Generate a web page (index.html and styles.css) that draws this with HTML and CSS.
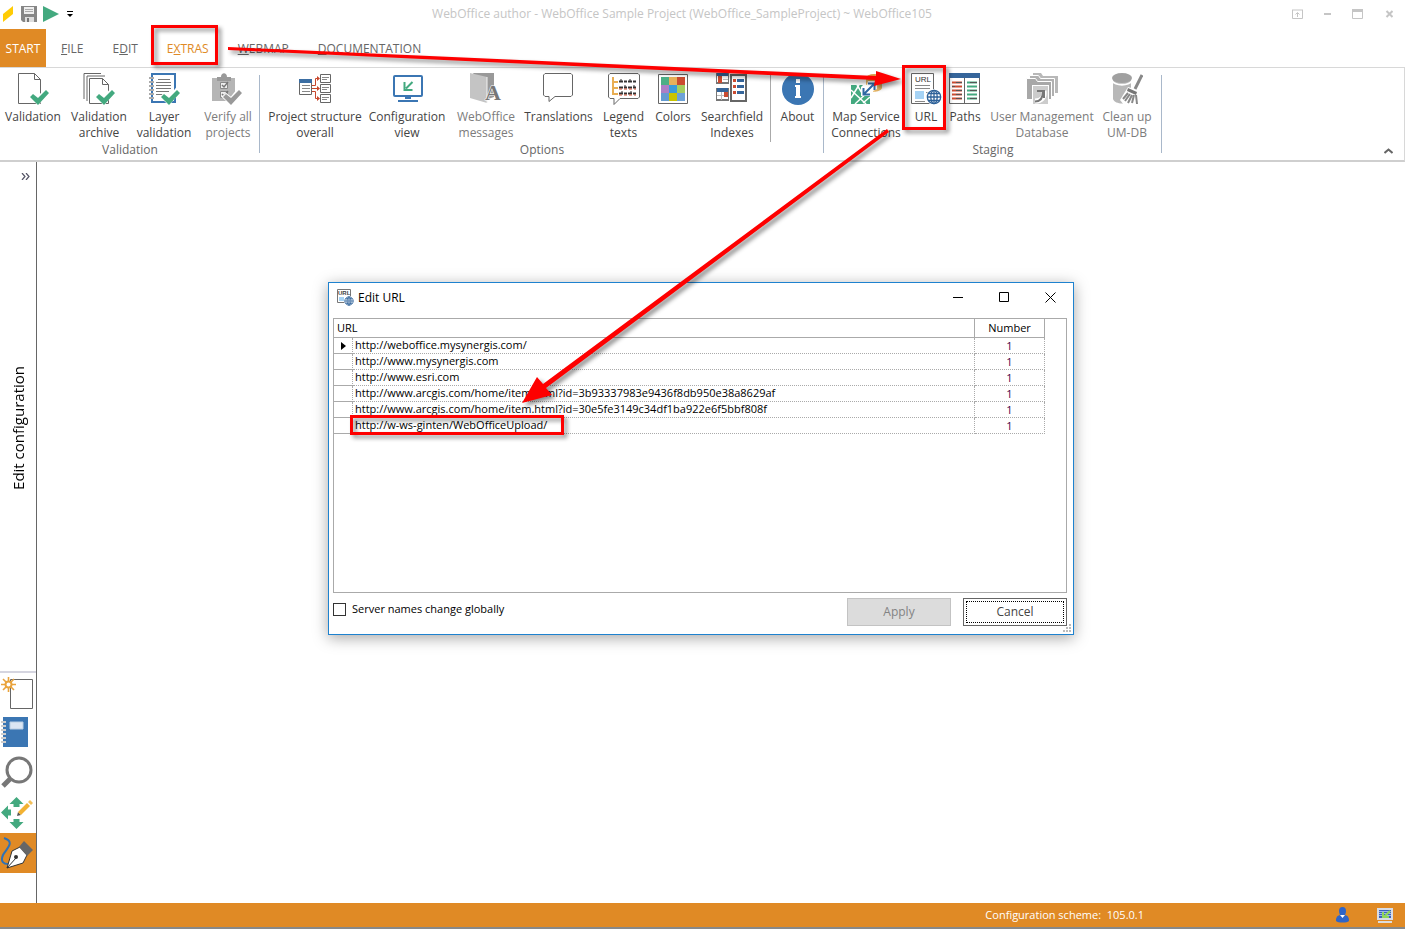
FILE: index.html
```html
<!DOCTYPE html>
<html lang="en">
<head>
  <meta charset="UTF-8" />
  <title>WebOffice author - WebOffice Sample Project</title>
  <link rel="stylesheet" href="styles.css">
</head>
<body>
  <!-- shared symbols -->
  <svg class="symbols" aria-hidden="true">
    <symbol id="check" viewBox="0 0 32 32">
      <path d="M13 24l3-3 5 4 8-10 3 3-11 13z" stroke="#fff" stroke-width="2" fill="#fff"/>
      <path d="M13 24l3-3 5 4 8-8 3 3-11 12z" fill="currentColor"/>
    </symbol>
    <symbol id="globe" viewBox="0 0 16 16">
      <circle cx="8" cy="8" r="8" fill="#fff"/>
      <g fill="none" stroke="#2d6199" stroke-width="1.300">
        <circle cx="8" cy="8" r="6.700"/><ellipse cx="8" cy="8" rx="3.200" ry="6.700"/>
        <path d="M8 1v14M1 8h14M2.500 4.500h11M2.500 11.500h11"/>
      </g>
    </symbol>
  </svg>

  <header class="titlebar">
    <div class="quick">
      <svg width="10" height="16"><path d="M0 8l10-8v8L0 16z" fill="#ffcc05"/></svg>
      <button aria-label="Save"><svg width="16" height="16"><path d="M0 0h16v16H2l-2-2z" fill="#868686"/><path d="M3 1h10v7H3z" fill="#eee"/><path d="M4 3.500h8M4 5.500h8" stroke="#aaa"/><path d="M4 11h9v5H4z" fill="#ddd"/><path d="M6 12h2v4H6z" fill="#777"/></svg></button>
      <button aria-label="Run"><svg width="16" height="16"><path d="M0 0l16 8-16 8z" fill="#43a97f"/></svg></button>
      <button class="more" aria-label="Customize"><svg width="6" height="6"><path d="M0 .5h6" stroke="#000"/><path d="M0 3h6L3 6z"/></svg></button>
    </div>
    <div class="title">WebOffice author - WebOffice Sample Project (WebOffice_SampleProject) ~ WebOffice105</div>
    <div class="winbtns">
      <button aria-label="Ribbon options"><svg width="11" height="10"><path d="M.5 1v8.500h10V1M0 1h11" fill="none" stroke="#c5c5c5"/><path d="M5.500 8V4M3.500 5.500l2-2 2 2" fill="none" stroke="#c5c5c5"/></svg></button>
      <button aria-label="Minimize"><svg width="11" height="10"><path d="M2 4h7v2H2z" fill="#c5c5c5"/></svg></button>
      <button aria-label="Maximize"><svg width="11" height="10"><path d="M.5 1v8.500h10V1" fill="none" stroke="#c5c5c5"/><path d="M0 0h11v3H0z" fill="#c5c5c5"/></svg></button>
      <button aria-label="Close"><svg width="11" height="10"><path d="M4.500 2l6 6M10.500 2l-6 6" stroke="#c5c5c5" stroke-width="2"/></svg></button>
    </div>
  </header>

  <nav class="tabs">
    <a href="#" class="start">START</a>
    <a href="#"><u>F</u>ILE</a>
    <a href="#">E<u>D</u>IT</a>
    <a href="#" class="active">E<u>X</u>TRAS</a>
    <a href="#"><u>W</u>EBMAP</a>
    <a href="#"><u>D</u>OCUMENTATION</a>
  </nav>

  <section class="ribbon">
    <div class="group">
      <div class="items validation">
        <button>
          <svg class="icon" viewBox="0 0 32 32"><path d="M1.500 .5h16l6 6v24h-22zM17.500 .5v6h6" fill="#fff" stroke="#666"/><use href="#check" class="green"/></svg>
          Validation
        </button>
        <button>
          <svg class="icon" viewBox="0 0 32 32"><path d="M1 26V.5h17M4 28V3h18" fill="none" stroke="#666"/><path d="M6.500 5.500h13l6 6v19h-19zM19.500 5.500v6h6" fill="#fff" stroke="#666"/><use href="#check" class="green"/></svg>
          Validation<br>archive
        </button>
        <button>
          <svg class="icon" viewBox="0 0 32 32"><path d="M4 1h23v28H4z" fill="#fff" stroke="#3b76b3" stroke-width="2"/><path d="M1 5h5M1 9h5M1 13h5M1 17h5M1 21h5M1 25h5" stroke="#aaa" stroke-width="2"/><path d="M10 6.500h12M8 9.500h15M8 12.500h15M8 15.500h15M8 18.500h13M8 21.500h8" stroke="#777"/><use href="#check" class="green"/></svg>
          Layer<br>validation
        </button>
        <button disabled>
          <svg class="icon" viewBox="0 0 32 32"><path d="M0 5h23v23H0z" fill="#b5b5b5"/><path d="M5 4h4c0-5 6-5 6 0h4v4H5z" fill="#999"/><path d="M8.500 9.500h7v6h-7zM8.500 18.500h7v6h-7z" fill="#eee" stroke="#888"/><path d="M10 12l2 2 4-5M10 21l2 2 4-5" fill="none" stroke="#777" stroke-width="1.500"/><use href="#check" class="grey" x="-2"/></svg>
          Verify all<br>projects
        </button>
      </div>
      <div class="caption">Validation</div>
    </div>

    <div class="group">
      <div class="items options">
        <button>
          <svg class="icon" viewBox="0 0 32 32"><path d="M.5 6.500h12v15H.5z" fill="#fff" stroke="#666"/><path d="M0 6h13v4H0z" fill="#3b6ea3"/><path d="M3 12.500h8M3 15.500h8M3 18.500h8" stroke="#888"/><path d="M13 12.500h3.500v-7H20M13 15.500h7M13 18.500h3.500v7H20" fill="none" stroke="#c8472c"/><path d="M18 3l3 2.500-3 2.500zM18 13l3 2.500-3 2.500zM18 23l3 2.500-3 2.500z" fill="#c8472c"/><path d="M21.500 1.500h10v8h-10zM21.500 11.500h10v8h-10zM21.500 21.500h10v8h-10z" fill="#fff" stroke="#666"/><path d="M23 4.500h7M23 6.500h5M23 14.500h7M23 16.500h5M23 24.500h7M23 26.500h5" stroke="#888"/></svg>
          Project structure<br>overall
        </button>
        <button>
          <svg class="icon" viewBox="0 0 32 32"><rect x="3" y="3" width="28" height="20" rx="1" fill="#fff" stroke="#3b76b3" stroke-width="2"/><path d="M14 24h6v2h-6zM7 27h20v2H7z" fill="#3b76b3"/><path d="M21.500 9L15 15.500M13.500 9v8h8" fill="none" stroke="#43a97f" stroke-width="2"/></svg>
          Configuration<br>view
        </button>
        <button disabled>
          <svg class="icon" viewBox="0 0 32 32"><path d="M3 0h21v24l-6 2z" fill="#999"/><path d="M0 0l17 4v26L0 25z" fill="#c4c4c4"/><path d="M17 4v26" stroke="#f2f2f2"/><text x="15" y="27" font-size="22" font-weight="bold" font-family="Liberation Serif, serif" fill="#777" stroke="#fff" stroke-width="1" paint-order="stroke">A</text></svg>
          WebOffice<br>messages
        </button>
        <button>
          <svg class="icon" viewBox="0 0 32 32"><path d="M2 .5h26l1.500 1.500v20L28 23.500H12l-6 5v-5H2L.5 22V2z" fill="#fff" stroke="#666"/></svg>
          Translations
        </button>
        <button>
          <svg class="icon" viewBox="0 0 32 32"><path d="M2 .5h28L31.500 2v22L30 25.500H12l-6 6v-6H2L.5 24V2z" fill="#fff" stroke="#666"/><path d="M5 4v18M5 9h5M5 15h5M5 21h5" fill="none" stroke="#e8ad52" stroke-width="2"/><path d="M11 8.500h17M11 14.500h17M11 20.500h17" stroke="#333" stroke-width="2" stroke-dasharray="4 1 3 1"/><path d="M13 6v2M22 6v2M17 12v2M26 12v2M14 18v2M23 18v2" stroke="#333"/><path d="M11 16h17M11 22h17" stroke="#cf4d31" stroke-dasharray="3 2"/></svg>
          Legend<br>texts
        </button>
        <button>
          <svg class="icon" viewBox="0 0 32 32"><path d="M1.500 1.500h29v29h-29z" fill="#fff" stroke="#666"/><path d="M4 4h8v8H4z" fill="#4caf86"/><path d="M12 4h8v8h-8z" fill="#e8b05a"/><path d="M20 4h8v8h-8z" fill="#cb4b30"/><path d="M4 12h8v8H4z" fill="#ad7fc6"/><path d="M12 12h8v8h-8z" fill="#3c9bd9"/><path d="M20 12h8v8h-8z" fill="#a4ce60"/><path d="M4 20h8v8H4z" fill="#659bd1"/><path d="M12 20h8v8h-8z" fill="#c9c400"/><path d="M20 20h8v8h-8z" fill="#6da2d8"/></svg>
          Colors
        </button>
        <button>
          <svg class="icon" viewBox="0 0 32 32"><path d="M0 2h12M0 10h12M0 16h12M0 27h12" stroke="#777" stroke-width="2"/><path d="M0 0h12v3H0zM0 15h12v4H0z" fill="#35659a"/><path d="M.5 0v11M12.500 0v11M.5 15v13M12.500 15v13" stroke="#777"/><path d="M2 3h4v7H2zM8 19h4v5H8z" fill="#cb4b30"/><path d="M7 6.500h5M1 22.500h7M5.500 19v8" stroke="#bbb"/><path d="M15 2h15v26H15z" fill="#fff" stroke="#666" stroke-width="2"/><path d="M17 6h3v3h-3zM17 12h3v3h-3zM17 18h3v3h-3z" fill="#cb4b30"/><path d="M21 6h7v3h-7zM21 12h7v3h-7zM21 18h7v3h-7z" fill="#35659a"/></svg>
          Searchfield<br>Indexes
        </button>
        <button class="divided">
          <svg class="icon" viewBox="0 0 32 32"><circle cx="16" cy="16" r="16" fill="#3b76b3"/><path d="M14 6h4v4h-4zM13 12h5v11h1v2h-6v-2h1v-9h-1z" fill="#fff"/></svg>
          About
        </button>
      </div>
      <div class="caption">Options</div>
    </div>

    <div class="group">
      <div class="items staging">
        <button>
          <svg class="icon" viewBox="0 0 32 32"><path d="M16 5v10c2 5 14 5 16 0V5z" fill="#e8b867"/><ellipse cx="24" cy="5" rx="8" ry="4" fill="#dfa04a"/><path d="M1 12h19v19H1z" fill="#43a97f"/><path d="M1 17l15 14M20 17L5 31M7 12l5 8M1 25l8-13M13 30l7-6" stroke="#fff" stroke-width="1.500"/><path d="M11 14l3-3 3 1 1-4h9v8l-4 2v5H11z" fill="#fff"/><path d="M14 21L24 11M13.500 15v6.500H20M18 10.500h6.500V17" fill="none" stroke="#2f68a3" stroke-width="2"/></svg>
          Map Service<br>Connections
        </button>
        <button>
          <svg class="icon" viewBox="0 0 32 32"><path d="M1.500 .5h22v30h-22z" fill="#fff" stroke="#666"/><text x="5" y="9" font-size="8" font-family="Liberation Sans, sans-serif" fill="#333">URL</text><path d="M5 12.500h15M5 15.500h15M16 19.500h4M16 22.500h2M5 28.500h10" stroke="#888"/><path d="M5 18h9v8H5z" fill="#a6d3f5"/><use href="#globe" x="16" y="16" width="16" height="16"/></svg>
          URL
        </button>
        <button>
          <svg class="icon" viewBox="0 0 32 32"><path d="M.5 .5h30v30H.5zM15.500 4v27" fill="#fff" stroke="#666"/><path d="M0 0h31v5H0z" fill="#35659a"/><path d="M3 9.500h10M3 13.500h10M3 17.500h10M3 21.500h10M3 25.500h10" stroke="#cb4b30" stroke-width="2"/><path d="M18 9.500h10M18 13.500h10M18 17.500h10M18 21.500h10M18 25.500h10" stroke="#43a97f" stroke-width="2"/><path d="M7 9.500h6M3 13.500h3M7 17.500h6M7 21.500h6M7 25.500h6M21 9.500h7M21 17.500h7M21 25.500h7" stroke="#555"/></svg>
          Paths
        </button>
        <button disabled>
          <svg class="icon" viewBox="0 0 32 32"><path d="M7 0h8l2 3h15v17H7z" fill="#b8b8b8"/><path d="M3.500 2.500h9l2 3h14v18h-25z" fill="#b0b0b0" stroke="#fff"/><path d="M.5 5.500h9l2 3h14v18H.5z" fill="#a8a8a8" stroke="#fff"/><path d="M6 12h17v20H6z" fill="#fff"/><path d="M7 13h15v18H7z" fill="#ccc"/><path d="M9 28c7 0 10-4 9-10" fill="none" stroke="#fff" stroke-width="5"/><path d="M9 28.500c6 0 8-4 8-10M11 18h7v7" fill="none" stroke="#777" stroke-width="2"/></svg>
          User Management<br>Database
        </button>
        <button disabled>
          <svg class="icon" viewBox="0 0 32 32"><path d="M2 5v21c2 6 16 6 18 0V5z" fill="#b8b8b8"/><ellipse cx="11" cy="5" rx="10" ry="5" fill="#a0a0a0"/><path d="M1 8c4 5 16 5 20 0" fill="none" stroke="#fff" stroke-width="2"/><path d="M9 27l8-13 10 3v15H13z" fill="#fff"/><path d="M31 2l-7 14" stroke="#888" stroke-width="3"/><path d="M17 15l9 4-1 3-9-4z" fill="#777"/><path d="M17 20l-5 6M19 21l-5 7M21 22l-4 8M23 22l-2 8M25 22l1 9" stroke="#888" stroke-width="2"/></svg>
          Clean up<br>UM-DB
        </button>
      </div>
      <div class="caption">Staging</div>
    </div>
    <button class="collapse" aria-label="Collapse ribbon"><svg width="9" height="6"><path d="M.5 5L4.500 1.500 8.500 5" fill="none" stroke="#666" stroke-width="2"/></svg></button>
  </section>

  <main class="workspace">
    <aside class="sidebar">
      <button class="expand" aria-label="Expand"><svg width="9" height="7"><path d="M1 0l3 3.500L1 7M5 0l3 3.500L5 7" fill="none" stroke="#556" stroke-width="1.200"/></svg></button>
      <div class="side-title"><span>Edit configuration</span></div>
      <div class="tools">
        <button aria-label="New"><svg width="36" height="40"><path d="M10.500 6.500h22v29h-22z" fill="#fff" stroke="#666"/><path d="M1 11.500h15M8.500 4v15M3 6l11 11M14 6L3 17" stroke="#e9a33c" stroke-width="1.600"/><circle cx="8.500" cy="11.500" r="3" fill="#fff" stroke="#e9a33c" stroke-width="2"/></svg></button>
        <button aria-label="Project"><svg width="36" height="40"><path d="M3 4h25v30H3z" fill="#3b76b3"/><path d="M10 9h13v7H10z" fill="#dbe6f3" stroke="#b8cde2"/><path d="M1 9h5M1 13h5M1 17h5M1 21h5M1 25h5M1 29h5" stroke="#ccc" stroke-width="2"/></svg></button>
        <button aria-label="Search"><svg width="36" height="40"><circle cx="19" cy="17" r="12" fill="#fff" stroke="#777" stroke-width="3"/><path d="M10 26l-7 7" stroke="#777" stroke-width="5"/></svg></button>
        <button aria-label="Edit"><svg width="36" height="40"><path d="M16.500 4l7 7h-4v3h-6v-3h-4zM16.500 36l7-7h-4v-3h-6v3h-4zM1 19.500l7-7v4h3v6H8v4z" fill="#43a97f"/><path d="M17 23l1-4 3 3z" fill="#555"/><path d="M18 19l9-9 3 3-9 9z" fill="#f3b233"/><path d="M28 9l2-2 3 3-2 2z" fill="#f3c05a"/></svg></button>
        <button class="selected" aria-label="Configure"><svg width="36" height="40"><path d="M4 5c12 4 2 11-1 17-3 7 1 9 5 9" fill="none" stroke="#2f72b5" stroke-width="2"/><path d="M7 35l5-17 8-4 7 8-4 8z" fill="#fff" stroke="#333"/><path d="M19 14l5-6 9 9-6 6z" fill="#666"/><path d="M7 35l9-10" stroke="#333"/><circle cx="16" cy="24" r="2" fill="#333"/></svg></button>
      </div>
    </aside>
  </main>

  <footer class="status">
    <span>Configuration scheme:&nbsp; 105.0.1</span>
    <svg class="user" width="13" height="16"><path d="M3 4a3.500 4 0 0 1 7 0c0 2-1 4-1 4 4 1 4 4 4 6-2 2-11 2-13 0 0-2 0-5 4-6 0 0-1-2-1-4z" fill="#2f65c8"/><path d="M4 8l2.500 3L9 8z" fill="#fff"/></svg>
    <svg width="16" height="15"><path d="M0 0h16v12H0z" fill="#d8dce6"/><path d="M2 2h12v8H2z" fill="#3c61bb"/><path d="M2 3.500h12M2 5.500h12M2 7.500h12" stroke="#9db6ec"/><path d="M13 3L7 9M6 4v5h6" fill="none" stroke="#8fd65a" stroke-width="2"/><path d="M1 13h14v2H1z" fill="#ddd"/></svg>
  </footer>

  <!-- URL dialog -->
  <div class="dialog" role="dialog" aria-labelledby="dlgTitle">
    <div class="dialog-head">
      <svg width="17" height="17"><path d="M.5 .5h13v13H.5z" fill="#fff" stroke="#777"/><text x="1" y="6" font-size="6" font-weight="bold" font-family="Liberation Sans, sans-serif" fill="#444">URL</text><path d="M2 8h5v4H2z" fill="#a6d3f5"/><use href="#globe" x="7" y="7" width="10" height="10"/></svg>
      <span id="dlgTitle">Edit URL</span>
      <div class="dialog-btns">
        <button aria-label="Minimize"><svg width="11" height="11"><path d="M0 5.500h10" stroke="#000"/></svg></button>
        <button aria-label="Maximize"><svg width="11" height="11"><path d="M.5 .5h9v9h-9z" fill="none" stroke="#000"/></svg></button>
        <button aria-label="Close"><svg width="11" height="11"><path d="M.5 .5l10 10M10.500 .5l-10 10" stroke="#000"/></svg></button>
      </div>
    </div>
    <div class="grid">
      <table>
        <colgroup><col class="col-mark"><col><col class="col-num"></colgroup>
        <thead>
          <tr><th colspan="2">URL</th><th class="num">Number</th></tr>
        </thead>
        <tbody>
          <tr><td class="mark"><svg width="5" height="8"><path d="M0 0l5 4-5 4z"/></svg></td><td>http://weboffice.mysynergis.com/</td><td class="num">1</td></tr>
          <tr><td class="mark"></td><td>http://www.mysynergis.com</td><td class="num">1</td></tr>
          <tr><td class="mark"></td><td>http://www.esri.com</td><td class="num">1</td></tr>
          <tr><td class="mark"></td><td>http://www.arcgis.com/home/item.html?id=3b93337983e9436f8db950e38a8629af</td><td class="num">1</td></tr>
          <tr><td class="mark"></td><td>http://www.arcgis.com/home/item.html?id=30e5fe3149c34df1ba922e6f5bbf808f</td><td class="num">1</td></tr>
          <tr><td class="mark"></td><td>http://w-ws-ginten/WebOfficeUpload/</td><td class="num">1</td></tr>
        </tbody>
      </table>
    </div>
    <div class="dialog-foot">
      <input type="checkbox" id="globally">
      <label for="globally">Server names change globally</label>
      <button disabled>Apply</button>
      <button class="cancel">Cancel</button>
    </div>
    <svg class="grip" width="8" height="8"><path d="M6 0h2v2H6zM3 3h2v2H3zM6 3h2v2H6zM0 6h2v2H0zM3 6h2v2H3zM6 6h2v2H6z" fill="#bbb"/></svg>
  </div>

  <!-- highlight boxes and arrows -->
  <svg class="marks" aria-hidden="true">
    <g fill="none" stroke="#fe0000" stroke-width="3">
      <rect x="152.500" y="26.500" width="64" height="37"/>
      <rect x="903.500" y="66.500" width="41" height="62"/>
      <rect x="351.500" y="416.500" width="211" height="17"/>
    </g>
    <path d="M228 47L876 76V71L901 79L874 86L875 80L228 50z" fill="#fe0000"/>
    <path d="M887 129L889 132L546 388L552 395L522 403L537 377L543 384z" fill="#fe0000"/>
  </svg>
</body>
</html>
```
FILE: styles.css
```css
* {
  box-sizing: border-box;
}

body {
  margin: 0;
  min-height: 100vh;
  display: flex;
  flex-direction: column;
  position: relative;
  overflow: hidden;
  background: #fff;
  color: #444;
  font-family: "Open Sans", "Noto Sans", sans-serif;
  font-size: 12px;
  line-height: 16px;
}

button {
  padding: 0;
  border: none;
  background: none;
  color: inherit;
  font: inherit;
}

svg {
  display: block;
}

.symbols {
  position: absolute;
  width: 0;
  height: 0;
}

/* title bar */
.titlebar {
  height: 29px;
  display: grid;
  grid-template-columns: 1fr auto 1fr;
  align-items: center;
  padding: 0 12px 1px 3px;
}

.title {
  color: #c5c5c5;
  padding-right: 32px;
}

.quick {
  display: flex;
  align-items: center;
  gap: 8px;
}

.quick button + button {
  margin-left: -2px;
}

.quick button + .more {
  margin-left: 0;
}

.winbtns {
  display: flex;
  justify-content: flex-end;
  gap: 19px;
}

/* tabs */
.tabs {
  height: 38px;
  display: flex;
  align-items: center;
  gap: 29px;
}

.tabs a {
  color: #666;
  text-decoration: none;
  line-height: 38px;
  padding-top: 1px;
}

.tabs .start {
  background: #e08a25;
  color: #fff;
  width: 46px;
  height: 38px;
  text-align: center;
  margin-right: -14px;
}

.tabs .active {
  color: #e08a25;
}

/* ribbon */
.ribbon {
  display: flex;
  height: 95px;
  border: 1px solid #d8d8d8;
  border-left: none;
  border-bottom: 2px solid #cfcfcf;
}

.group {
  position: relative;
  padding: 5px 0 2px;
}

.group::after {
  content: "";
  position: absolute;
  top: 7px;
  bottom: 7px;
  right: 0;
  width: 1px;
  background: #a9b8ca;
}

.items {
  display: grid;
  height: 69px;
}

.items button {
  display: flex;
  flex-direction: column;
  align-items: center;
  justify-content: flex-start;
  white-space: nowrap;
  text-align: center;
}

.items button:disabled {
  color: #7c7c7c;
}

.icon {
  width: 32px;
  height: 32px;
  margin-bottom: 4px;
}

.validation {
  grid-template-columns: 66px 66px 64px 64px;
}

.options {
  grid-template-columns: 98px 86px 72px 73px 57px 42px 76px 54px;
  padding-left: 6px;
}

.staging {
  grid-template-columns: 78px 42px 36px 118px 52px;
  padding: 0 9px 0 3px;
}

.divided {
  border-left: 1px solid #aaa;
}

.caption {
  color: #666;
  text-align: center;
}

.green {
  color: #43a97f;
}

.grey {
  color: #999;
}

.collapse {
  margin: auto 11px 6px auto;
}

/* workspace */
.workspace {
  flex: 1;
  display: flex;
}

.sidebar {
  width: 37px;
  border-right: 1px solid #666;
  padding-bottom: 30px;
  display: flex;
  flex-direction: column;
}

.expand {
  height: 22px;
  padding: 6px 6px 0 21px;
}

.side-title {
  flex: 1;
  display: flex;
  align-items: center;
  justify-content: center;
  color: #000;
  font-size: 15px;
}

.side-title span {
  writing-mode: vertical-rl;
  transform: rotate(180deg);
}

.tools {
  border-top: 2px solid #d5d5e0;
}

.tools button {
  display: block;
  width: 100%;
  height: 40px;
}

.tools .selected {
  background: #e08a25;
}

/* status bar */
.status {
  height: 26px;
  display: flex;
  align-items: center;
  justify-content: flex-end;
  padding-right: 12px;
  background: #e08a25;
  border-bottom: 2px solid #888;
  color: #fff;
  font-size: 11px;
}

.user {
  margin: 0 28px 0 192px;
}

/* dialog */
.dialog {
  position: absolute;
  left: 328px;
  top: 282px;
  width: 746px;
  padding: 0 6px 8px 4px;
  border: 1px solid #1e82cf;
  background: #fff;
  box-shadow: 0 3px 14px rgba(0, 0, 0, 0.35);
  color: #000;
  font-size: 11px;
}

.dialog-head {
  height: 35px;
  display: flex;
  align-items: center;
  gap: 4px;
  padding: 0 11px 6px 4px;
  font-size: 12px;
}

.dialog-btns {
  display: flex;
  gap: 35px;
  margin-left: auto;
}

.grid {
  height: 275px;
  border: 1px solid #aaa;
}

.grid table {
  width: 711px;
  table-layout: fixed;
  border-collapse: separate;
  border-spacing: 0;
}

.col-mark {
  width: 19px;
}

.col-num {
  width: 70px;
}

.grid th {
  height: 19px;
  padding: 0 3px;
  border-right: 1px solid #aaa;
  border-bottom: 1px solid #aaa;
  font-weight: normal;
  text-align: left;
  line-height: 18px;
}

.grid td {
  height: 16px;
  padding: 0 2px;
  border-right: 1px dotted #aaa;
  border-bottom: 1px dotted #aaa;
  line-height: 14px;
  vertical-align: top;
  white-space: nowrap;
}

.grid .mark {
  padding-left: 7px;
  border-bottom-style: solid;
  vertical-align: middle;
}

.grid .num {
  text-align: center;
}

.grid td.num {
  color: #404;
  line-height: 15px;
}

.dialog-foot {
  display: flex;
  align-items: center;
  padding-top: 5px;
}

.dialog-foot input {
  appearance: none;
  width: 13px;
  height: 13px;
  margin: 0 6px 6px 0;
  border: 1px solid #333;
}

.dialog-foot label {
  margin: 0 auto 6px 0;
}

.dialog-foot button {
  width: 104px;
  height: 28px;
  margin-left: 12px;
  border: 1px solid #c3c3c3;
  background: #dcdcdc;
  color: #838383;
  font-size: 12px;
}

.dialog-foot .cancel {
  border: 1px solid #666;
  background: #fff;
  color: #444;
  outline: 1px dotted #000;
  outline-offset: -4px;
}

.grip {
  position: absolute;
  right: 2px;
  bottom: 2px;
}

/* annotation layer */
.marks {
  position: absolute;
  inset: 0;
  width: 100%;
  height: 100%;
  pointer-events: none;
  filter: drop-shadow(3px 3px 2px rgba(0, 0, 0, 0.45));
}
```
